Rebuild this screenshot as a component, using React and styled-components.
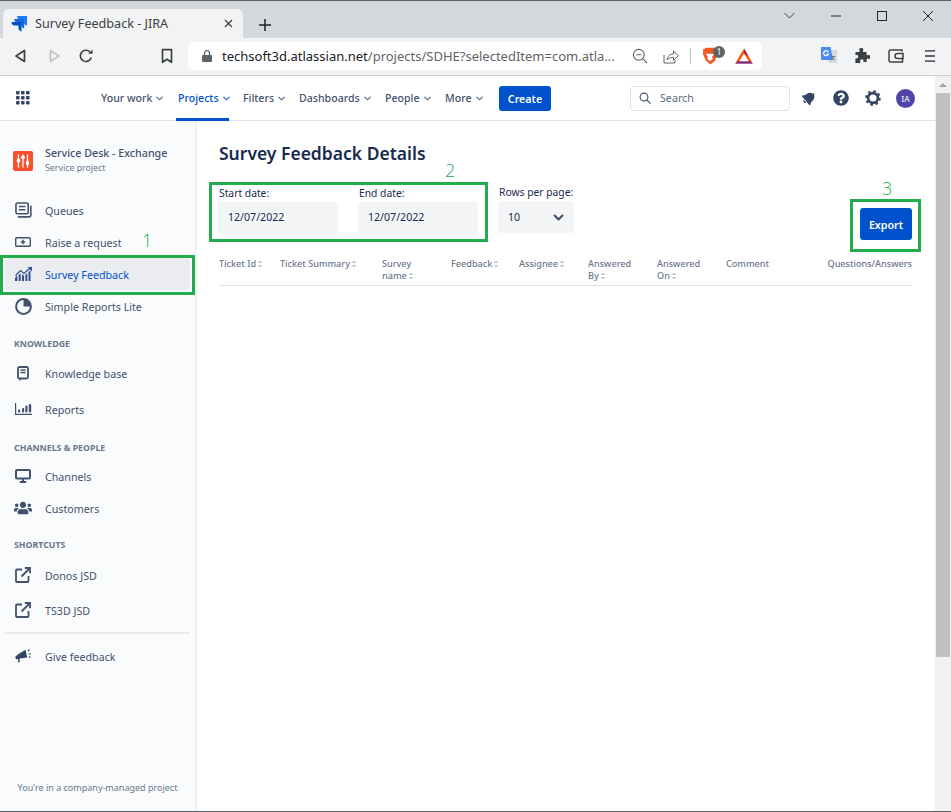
import React from "react";
import styled, { createGlobalStyle } from "styled-components";
import { FaBell, FaQuestionCircle, FaUsers } from "react-icons/fa";

const Global = createGlobalStyle`
  html, body { margin: 0; padding: 0; background: #fff; overflow: hidden; }
  * { box-sizing: border-box; }
`;

const Chevron = ({ size = 9, color = "#6b778c", width = 1.6 }) => (
  <svg width={size} height={size} viewBox="0 0 10 10" fill="none">
    <path d="M2 3.500 5 6.500 8 3.500" stroke={color} strokeWidth={width} strokeLinecap="round" strokeLinejoin="round" />
  </svg>
);

const SortIcon = () => (
  <SortMark viewBox="0 0 6 8" width="6" height="8">
    <path d="M3 .5 5.400 3H.6zM3 7.500 .6 5h4.800z" fill="#c1c7d0" />
  </SortMark>
);

const JiraLogo = () => (
  <svg width="17" height="17" viewBox="0 0 17 17">
    <path d="M6 1h10v9.500c-1.900-.2-3-1.400-3-3.300V4.600H9C7.200 4.600 6.100 3 6 1z" fill="#1d7afc" />
    <path d="M3.200 3.900h10v9.600c-1.900-.2-3-1.500-3-3.400V7.500h-4c-1.800 0-2.900-1.600-3-3.600z" fill="#1868db" />
    <path d="M.5 7h10v9.500c-1.900-.2-3-1.500-3-3.400v-2.600h-4C1.700 10.500.6 9 .5 7z" fill="#0052cc" />
  </svg>
);

const BackIcon = () => (
  <svg width="16" height="16" viewBox="0 0 16 16" fill="none">
    <path d="M11.500 2.500v11L3 8z" stroke="#3c4043" strokeWidth="1.700" strokeLinejoin="round" />
  </svg>
);

const ForwardIcon = () => (
  <svg width="16" height="16" viewBox="0 0 16 16" fill="none">
    <path d="M4.500 2.500v11L13 8z" stroke="#b5b8bb" strokeWidth="1.400" strokeLinejoin="round" />
  </svg>
);

const ReloadIcon = () => (
  <svg width="16" height="16" viewBox="0 0 16 16" fill="none">
    <path d="M13.300 9.500A5.600 5.600 0 1 1 11.800 3.800" stroke="#3c4043" strokeWidth="1.600" />
    <path d="M10.200 5.700h4.300V1.400z" fill="#3c4043" />
  </svg>
);

const BookmarkIcon = () => (
  <svg width="14" height="16" viewBox="0 0 14 16" fill="none">
    <path d="M2.500 1.700h9v12.600L7 11.300l-4.500 3z" stroke="#3c4043" strokeWidth="1.700" strokeLinejoin="round" />
  </svg>
);

const LockIcon = () => (
  <LockSvg width="10" height="12" viewBox="0 0 10 12">
    <path d="M1 5h8a1 1 0 0 1 1 1v5a1 1 0 0 1-1 1H1a1 1 0 0 1-1-1V6a1 1 0 0 1 1-1z" fill="#5f6368" />
    <path d="M2.500 5V3.200a2.500 2.500 0 0 1 5 0V5" stroke="#5f6368" strokeWidth="1.200" fill="none" />
  </LockSvg>
);

const ZoomOutIcon = () => (
  <svg width="16" height="16" viewBox="0 0 16 16" fill="none">
    <circle cx="6.800" cy="6.800" r="5.400" stroke="#5f6368" strokeWidth="1.100" />
    <path d="M10.800 10.800 15 15M4.300 6.800h5" stroke="#5f6368" strokeWidth="1.100" />
  </svg>
);

const ShareIcon = () => (
  <svg width="16" height="16" viewBox="0 0 16 16" fill="none">
    <path d="M1 7v8h11v-3" stroke="#5f6368" strokeWidth="1" />
    <path d="M4 12c.4-3.800 3.200-6 6.500-6V3l5 4.700-5 4.500V9.300C8 9.300 5.800 10 4 12z" stroke="#5f6368" strokeWidth="1" strokeLinejoin="round" />
  </svg>
);

const BraveIcon = () => (
  <svg width="16" height="18" viewBox="0 0 16 18">
    <path d="M3.500.8h9l1 1.200 1.700.3-.5 2.500.6 1.500-2 7.200-4.800 3.900-4.800-3.900L.7 6.300l.6-1.500-.5-2.500 1.700-.3z" fill="#f15a22" />
    <path d="M3.500 6.500 6.700 7 8 6.500 9.300 7l3.200-.5-2.400 3.200.7 2.300L8 14l-2.800-2 .7-2.300z" fill="#fff" />
  </svg>
);

const BatIcon = () => (
  <svg width="18" height="16" viewBox="0 0 18 16">
    <path d="M9 .5 17.800 15.500H.2z" fill="#ff5000" />
    <path d="M9 .5 13.400 8 9 5.400z" fill="#9e1f63" />
    <path d="M.2 15.500h17.600l-3-2.200H3.200z" fill="#662d91" />
    <path d="M9 5.400 13.800 13.300H4.200z" fill="#fff" />
  </svg>
);

const TranslateIcon = () => (
  <svg width="16" height="17" viewBox="0 0 16 17">
    <path d="M6 3h10v13H8z" fill="#d8dadc" />
    <path d="M0 0h9.500L12 13H0z" fill="#4a8af4" />
    <path d="M7.400 5.200A2.500 2.500 0 1 0 7.500 7H5.200" fill="none" stroke="#fff" strokeWidth="1.200" />
    <path d="M10.500 9.500h4M12.500 9v1c0 1.200-1 2.400-2 3M11.500 10.500c.4 1 1.300 2 2.500 2.500" fill="none" stroke="#6d7276" strokeWidth=".9" />
  </svg>
);

const PuzzleIcon = () => (
  <svg width="15" height="15" viewBox="0 0 15 15">
    <path d="M1 4h3.200a1 1 0 0 0 .4-1C4.400 2.500 4.300 2 4.300 1.800a2 2 0 0 1 4 0c0 .3-.1.700-.3 1.200a1 1 0 0 0 .4 1H11a.6.6 0 0 1 .6.6v2.200a1 1 0 0 0 1 .4c.4-.2.800-.3 1-.3a2 2 0 0 1 0 4c-.2 0-.6-.1-1-.3a1 1 0 0 0-1 .4v2.400a.6.6 0 0 1-.6.6H8.400c.3-2-.3-2.800-1.600-2.800S4.900 12.900 5.200 15H1a.6.6 0 0 1-.6-.6v-4c2 .3 2.800-.3 2.800-1.600S2.400 6.900.4 7.200V4.600A.6.6 0 0 1 1 4z" fill="#3c4043" />
  </svg>
);

const WalletIcon = () => (
  <svg width="16" height="14" viewBox="0 0 16 14" fill="none">
    <path d="M14 2.500V1H2.500A1.500 1.500 0 0 0 1 2.500v9A1.500 1.500 0 0 0 2.500 13h12V10" stroke="#3c4043" strokeWidth="1.500" />
    <path d="M15 4.500H9.500a2.500 2.500 0 0 0 0 5H15z" stroke="#3c4043" strokeWidth="1.500" />
  </svg>
);

const MenuIcon = () => (
  <MenuSvg width="12" height="12" viewBox="0 0 12 12">
    <path d="M1 0h10v1.800H1zM1 5.100h10v1.800H1zM1 10.200h10V12H1z" fill="#5f6368" />
  </MenuSvg>
);

const AppGrid = () => (
  <svg width="14" height="14" viewBox="0 0 14 14" fill="#344563">
    {[0, 5, 10].map((y) => [0, 5, 10].map((x) => <rect key={`${x}-${y}`} x={x} y={y} width="3.600" height="3.600" rx="1" />))}
  </svg>
);

const SearchIcon = () => (
  <svg width="12" height="12" viewBox="0 0 12 12" fill="none">
    <circle cx="5" cy="5" r="3.900" stroke="#42526e" strokeWidth="1.100" />
    <path d="M8 8l3.300 3.300" stroke="#42526e" strokeWidth="1.100" strokeLinecap="round" />
  </svg>
);

const GearIcon = () => (
  <svg width="16" height="16" viewBox="0 0 16 16" fill="none">
    <circle cx="8" cy="8" r="4.900" stroke="#344563" strokeWidth="2.600" />
    <circle cx="8" cy="8" r="6.800" stroke="#344563" strokeWidth="2" strokeDasharray="2.600 2.740" />
  </svg>
);

const ProjectLogo = () => (
  <svg width="20" height="20" viewBox="0 0 20 20">
    <rect width="20" height="20" rx="2" fill="#f4512c" />
    <path d="M5.500 4v12M10 4v12M14.500 4v12" stroke="#fff" strokeWidth="1.300" strokeLinecap="round" />
    <circle cx="5.500" cy="9.500" r="1.900" fill="#fff" />
    <circle cx="10" cy="6.300" r="1.900" fill="#fff" />
    <circle cx="14.500" cy="12" r="1.900" fill="#fff" />
  </svg>
);

const QueuesIcon = () => (
  <svg width="17" height="16" viewBox="0 0 18 17" fill="none">
    <rect x="1" y="1" width="13" height="11.500" rx="1.500" stroke="#42526e" strokeWidth="1.700" />
    <path d="M4 4.800h7M4 8.200h7" stroke="#42526e" strokeWidth="1.500" />
    <path d="M16.800 4v10a1.800 1.800 0 0 1-1.800 1.800H3" stroke="#42526e" strokeWidth="1.700" />
  </svg>
);

const RaiseIcon = () => (
  <svg width="16" height="10" viewBox="0 0 16 10" fill="none">
    <rect x=".7" y=".7" width="14.600" height="8.600" rx="1" stroke="#42526e" strokeWidth="1.400" />
    <path d="M8 2.800v4.400M5.800 5h4.400" stroke="#42526e" strokeWidth="1.500" />
  </svg>
);

const SurveyIcon = () => (
  <svg width="17" height="14" viewBox="0 0 17 14" fill="#344f8f">
    <path d="M0 11l1.600-2 .8.600V14H0zM3.700 8l2-1.800V14h-2zM7 7.300l2 1.500V14H7zM10.300 8l2-2v8h-2zM13.500 5l2-2v11h-2z" />
    <path d="M.5 8.500 5.500 3.500l3.500 3 5.500-5" fill="none" stroke="#344f8f" strokeWidth="1.200" />
    <path d="M12.500 0H17v4.500z" />
  </svg>
);

const PieIcon = () => (
  <svg width="17" height="17" viewBox="0 0 17 17" fill="none">
    <circle cx="8.500" cy="8.500" r="7.400" stroke="#42526e" strokeWidth="2" />
    <path d="M8.500 1.500a7 7 0 0 1 7 7h-7z" fill="#42526e" />
  </svg>
);

const BookIcon = () => (
  <svg width="12" height="15" viewBox="0 0 12 15" fill="none">
    <rect x="1" y="1" width="10" height="11.500" rx="1.500" stroke="#42526e" strokeWidth="1.800" />
    <path d="M3.500 4h5M3.500 6.500h5" stroke="#42526e" strokeWidth="1.400" />
    <path d="M3 13v1.500" stroke="#42526e" strokeWidth="1.300" />
  </svg>
);

const BarsIcon = () => (
  <svg width="17" height="12" viewBox="0 0 17 12" fill="#42526e">
    <path d="M0 0h1.200v10.700H17V12H0z" />
    <rect x="3" y="6.500" width="2.200" height="3" rx="1" />
    <rect x="7" y="5" width="2.200" height="4.500" rx="1" />
    <rect x="10.300" y="2.500" width="2.200" height="7" rx="1" />
    <rect x="13.800" y="1" width="2.400" height="8.500" rx="1" />
  </svg>
);

const MonitorIcon = () => (
  <svg width="16" height="14" viewBox="0 0 16 14" fill="none">
    <rect x="1" y="1" width="14" height="8.500" rx="1" stroke="#42526e" strokeWidth="2" />
    <path d="M8 10v3M4.800 13h6.400" stroke="#42526e" strokeWidth="2" />
  </svg>
);

const ExternalIcon = () => (
  <svg width="16" height="16" viewBox="0 0 16 16" fill="none">
    <path d="M7 2.500H2a1 1 0 0 0-1 1V14a1 1 0 0 0 1 1h10.500a1 1 0 0 0 1-1V9" stroke="#42526e" strokeWidth="1.800" />
    <path d="M6.500 9.500 14.500 1.500M9.800 1h5.200v5.200" stroke="#42526e" strokeWidth="1.800" />
  </svg>
);

const MegaphoneIcon = () => (
  <svg width="17" height="14" viewBox="0 0 17 14" fill="#344563">
    <path d="M.2 8 2.800 5.500 10.500.8l1.700 7.800-7 .9-1 .2.900 3.400-1.500.4L2.800 10 1 10.200z" />
    <path d="M13 2l1.500-1.500M13.700 5H16M13.700 7.600l1.800 1" fill="none" stroke="#344563" strokeWidth="1.100" />
  </svg>
);

const Window = styled.div`
  position: relative;
  width: 951px;
  height: 812px;
  display: flex;
  flex-direction: column;
  overflow: hidden;
  border-top: 1px solid #5f6265;
  border-bottom: 1px solid #5f6265;
  font-family: "Noto Sans", "Open Sans", sans-serif;
`;

const TabStrip = styled.div`
  height: 37px;
  flex: none;
  background: #d5d8db;
  display: flex;
  align-items: flex-end;
  padding-left: 3px;
`;

const Tab = styled.div`
  width: 240px;
  height: 29px;
  background: #f2f3f4;
  border-radius: 6px 6px 0 0;
  display: flex;
  align-items: center;
  padding: 0 8px;
  gap: 7px;
  font-size: 12.600px;
  color: #3c4043;
`;

const TabTitle = styled.span`
  flex: 1;
`;

const TabClose = styled.svg`
  margin-right: 2px;
`;

const NewTab = styled.svg`
  margin: 0 0 7px 16px;
`;

const WindowButtons = styled.div`
  margin-left: auto;
  align-self: stretch;
  display: flex;
  align-items: center;
  gap: 36px;
  padding: 0 18px 8px 0;
`;

const Toolbar = styled.div`
  height: 38px;
  flex: none;
  background: #f2f3f4;
  border-bottom: 1px solid #d0d2d4;
  display: flex;
  align-items: center;
  padding: 0 0 2px 13px;
`;

const ToolGroup = styled.div`
  display: flex;
  align-items: center;
  gap: 16.500px;
  width: 147px;
`;

const Bookmark = styled.div`
  width: 28px;
  display: flex;
`;

const AddressBar = styled.div`
  width: 574px;
  height: 28px;
  background: #fff;
  border-radius: 5px;
  display: flex;
  align-items: center;
  padding: 0 0 0 14px;
`;

const LockSvg = styled.svg`
  flex: none;
`;

const Url = styled.span`
  margin-left: 10px;
  width: 395px;
  flex: none;
  overflow: hidden;
  font-size: 13px;
  white-space: nowrap;
  color: #5f6368;
`;

const Domain = styled.span`
  color: #202124;
`;

const AddressIcons = styled.div`
  margin-left: 15px;
  display: flex;
  align-items: center;
  gap: 15px;
`;

const Separator = styled.div`
  width: 1px;
  height: 16px;
  background: #b9bbbe;
  margin: 0 -4px 0 -4px;
`;

const BraveWrap = styled.div`
  position: relative;
  display: flex;
  width: 18px;
`;

const BraveBadge = styled.span`
  position: absolute;
  left: 11px;
  top: -1px;
  width: 12px;
  height: 12px;
  border-radius: 50%;
  background: #5f6368;
  color: #fff;
  font-size: 8px;
  line-height: 12px;
  text-align: center;
`;

const Extensions = styled.div`
  margin-left: 59px;
  display: flex;
  align-items: center;
  gap: 18px;
`;

const MenuSvg = styled.svg`
  margin-left: 2px;
`;

const PageRow = styled.div`
  flex: 1;
  min-height: 0;
  display: flex;
`;

const Page = styled.div`
  flex: 1;
  min-width: 0;
  display: flex;
  flex-direction: column;
`;

const Scrollbar = styled.div`
  width: 16px;
  flex: none;
  background: #f1f1f1;
  display: flex;
  flex-direction: column;
  align-items: center;
  padding: 0 1px;
`;

const ScrollArrow = styled.div`
  height: 17px;
  flex: none;
  display: flex;
  align-items: center;
  width: 0;
  &::before {
    content: "";
    border-left: 4px solid transparent;
    border-right: 4px solid transparent;
    border-bottom: 4px solid #a3a3a3;
    margin-left: -4px;
  }
`;

const ScrollThumb = styled.div`
  width: 100%;
  height: 564px;
  background: #c1c1c1;
`;

const TopNav = styled.nav`
  height: 45px;
  flex: none;
  background: #fff;
  border-bottom: 1px solid #dfe1e6;
  display: flex;
  align-items: center;
  padding: 0 0 0 16px;
`;

const NavLinks = styled.div`
  margin-left: 71px;
  display: flex;
  align-items: center;
  height: 100%;
`;

const NavLink = styled.div`
  position: relative;
  height: 100%;
  display: flex;
  align-items: center;
  gap: 3px;
  margin-right: 8px;
  width: ${(p) => p.$width}px;
  font-size: 10.600px;
  font-weight: 500;
  white-space: nowrap;
  color: ${(p) => (p.$active ? "#0052cc" : "#42526e")};
  ${(p) =>
    p.$active &&
    `&::after {
      content: "";
      position: absolute;
      left: -2px;
      width: 53px;
      bottom: -1px;
      height: 3px;
      background: #0052cc;
    }`}
`;

const CreateButton = styled.button`
  width: 52px;
  height: 25px;
  border: 0;
  border-radius: 3px;
  background: #0052cc;
  color: #fff;
  padding: 2px 0 0;
  font: 600 10.700px "Noto Sans", sans-serif;
`;

const SearchBox = styled.div`
  margin-left: 79px;
  width: 160px;
  height: 25px;
  border: 1px solid #dfe1e6;
  border-radius: 4px;
  display: flex;
  align-items: center;
  gap: 9px;
  padding: 0 8px;
  font-size: 10.700px;
  color: #5e6c84;
`;

const NavIcons = styled.div`
  margin-left: 10px;
  display: flex;
  align-items: center;
  gap: 14px;
`;

const NavIconSlot = styled.div`
  width: 18px;
  height: 18px;
  display: flex;
  align-items: center;
  justify-content: center;
  color: #344563;
`;

const BellSlot = styled(NavIconSlot)`
  transform: rotate(50deg);
`;

const Avatar = styled.div`
  width: 19px;
  height: 19px;
  border-radius: 50%;
  background: #5243aa;
  color: #dfe1e6;
  font-size: 8px;
  font-weight: 600;
  line-height: 19px;
  text-align: center;
`;

const Body = styled.div`
  flex: 1;
  min-height: 0;
  display: flex;
`;

const Sidebar = styled.aside`
  width: 197px;
  flex: none;
  background: #fafbfc;
  border-right: 2px solid #f0f1f4;
  display: flex;
  flex-direction: column;
  padding: 26px 5px 16px;
`;

const ProjectHeader = styled.div`
  height: 28px;
  margin-bottom: 19px;
  display: flex;
  align-items: center;
  gap: 12px;
  padding-left: 8px;
`;

const ProjectText = styled.div`
  padding-bottom: 2px;
`;

const ProjectName = styled.div`
  font-size: 10.700px;
  font-weight: 500;
  line-height: 15px;
  color: #42526e;
`;

const ProjectType = styled.div`
  font-size: 8.800px;
  line-height: 14px;
  color: #6b778c;
`;

const NavRow = styled.div`
  height: ${(p) => p.$h || 32}px;
  display: flex;
  align-items: center;
  padding: 2px 0 0 8px;
  border-radius: 3px;
  font-size: 10.700px;
  color: ${(p) => (p.$active ? "#0052cc" : "#42526e")};
  background: ${(p) => (p.$active ? "#ebecf0" : "transparent")};
`;

const RowIcon = styled.span`
  width: 32px;
  flex: none;
  display: flex;
  align-items: center;
  justify-content: center;
  margin-top: -2px;
  padding-right: 12px;
  color: #42526e;
`;

const GroupTitle = styled.div`
  height: 16px;
  line-height: 18px;
  margin: ${(p) => p.$top}px 0 ${(p) => p.$bottom}px 9px;
  font-size: 8.800px;
  font-weight: 700;
  color: #6b778c;
`;

const Divider = styled.div`
  height: 2px;
  margin: 4px 0 6px;
  background: #ebecf0;
`;

const SideFooter = styled.div`
  margin-top: auto;
  padding-bottom: 1px;
  text-align: center;
  font-size: 9px;
  color: #6b778c;
`;

const Main = styled.main`
  flex: 1;
  min-width: 0;
  background: #fff;
  padding: 20px 23px 0 22px;
`;

const Title = styled.h1`
  margin: 0;
  height: 25px;
  font-size: 17.500px;
  line-height: 25px;
  font-weight: 600;
  color: #172b4d;
`;

const Controls = styled.div`
  margin-top: 17px;
  height: 75px;
  display: flex;
  align-items: flex-start;
`;

const Field = styled.div`
  width: ${(p) => p.$width}px;
  margin-right: ${(p) => p.$gap}px;
  margin-top: ${(p) => p.$top}px;
  margin-left: -1px;
  display: flex;
  flex-direction: column;
`;

const FieldLabel = styled.label`
  height: 15px;
  line-height: 15px;
  padding-left: 1px;
  margin-bottom: 1px;
  font-size: 10.300px;
  white-space: nowrap;
  color: #172b4d;
`;

const InputBox = styled.div`
  height: 32px;
  border-radius: 3px;
  background: #f4f5f7;
  display: flex;
  align-items: center;
  justify-content: space-between;
  padding: 0 9px ${(p) => (p.$select ? 0 : 2)}px 10px;
  font-size: 10.600px;
  color: #172b4d;
`;

const ExportButton = styled.button`
  margin: 25px 0 0 auto;
  width: 52px;
  height: 32px;
  border: 0;
  border-radius: 3px;
  background: #0052cc;
  color: #fff;
  padding: 2px 0 0;
  font: 600 10.700px "Noto Sans", sans-serif;
`;

const TableHead = styled.div`
  display: grid;
  grid-template-columns: 61px 102px 69px 68px 69px 69px 69px 1fr auto;
  height: 28px;
  border-bottom: 1px solid #dfe1e6;
  font-size: 9.100px;
  line-height: 12px;
  font-weight: 500;
  color: #6b778c;
`;

const SortMark = styled.svg`
  margin-left: 1px;
  vertical-align: -1px;
`;

const Outline = styled.div`
  position: absolute;
  left: ${(p) => p.$x}px;
  top: ${(p) => p.$y}px;
  width: ${(p) => p.$w}px;
  height: ${(p) => p.$h}px;
  border: 3px solid #22ac4c;
  pointer-events: none;
`;

const Callout = styled.span`
  position: absolute;
  left: ${(p) => p.$x}px;
  top: ${(p) => p.$y}px;
  font: 300 18px/20px "Open Sans", sans-serif;
  color: #22ac4c;
`;

const navItems = [
  { label: "Your work", width: 69 },
  { label: "Projects", width: 57, active: true },
  { label: "Filters", width: 48 },
  { label: "Dashboards", width: 78 },
  { label: "People", width: 52 },
  { label: "More", width: 46 },
];

const columns = [
  ["Ticket Id", true],
  ["Ticket Summary", true],
  [<>Survey<br />name</>, true],
  ["Feedback", true],
  ["Assignee", true],
  [<>Answered<br />By</>, true],
  [<>Answered<br />On</>, true],
  ["Comment", false],
  ["Questions/Answers", false],
];

export default function App() {
  return (
    <Window>
      <Global />
      <TabStrip>
        <Tab>
          <JiraLogo />
          <TabTitle>Survey Feedback - JIRA</TabTitle>
          <TabClose width="9" height="9" viewBox="0 0 9 9">
            <path d="M1 1l7 7M8 1 1 8" stroke="#3c4043" strokeWidth="1.300" />
          </TabClose>
        </Tab>
        <NewTab width="12" height="12" viewBox="0 0 12 12">
          <path d="M6 0v12M0 6h12" stroke="#202124" strokeWidth="1.500" />
        </NewTab>
        <WindowButtons>
          <svg width="11" height="7" viewBox="0 0 11 7" fill="none"><path d="M.5 1 5.500 6l5-5" stroke="#3c4043" /></svg>
          <svg width="10" height="2" viewBox="0 0 10 2"><path d="M0 1h10" stroke="#202124" /></svg>
          <svg width="10" height="10" viewBox="0 0 10 10" fill="none"><rect x=".5" y=".5" width="9" height="9" stroke="#202124" /></svg>
          <svg width="10" height="10" viewBox="0 0 10 10"><path d="M0 0l10 10M10 0 0 10" stroke="#202124" /></svg>
        </WindowButtons>
      </TabStrip>
      <Toolbar>
        <ToolGroup>
          <BackIcon />
          <ForwardIcon />
          <ReloadIcon />
        </ToolGroup>
        <Bookmark><BookmarkIcon /></Bookmark>
        <AddressBar>
          <LockIcon />
          <Url><Domain>techsoft3d.atlassian.net</Domain>/projects/SDHE?selectedItem=com.atla...</Url>
          <AddressIcons>
            <ZoomOutIcon />
            <ShareIcon />
            <Separator />
            <BraveWrap>
              <BraveIcon />
              <BraveBadge>1</BraveBadge>
            </BraveWrap>
            <BatIcon />
          </AddressIcons>
        </AddressBar>
        <Extensions>
          <TranslateIcon />
          <PuzzleIcon />
          <WalletIcon />
          <MenuIcon />
        </Extensions>
      </Toolbar>
      <PageRow>
        <Page>
          <TopNav>
            <AppGrid />
            <NavLinks>
              {navItems.map((item) => (
                <NavLink key={item.label} $width={item.width} $active={item.active}>
                  {item.label}
                  <Chevron color={item.active ? "#4c7fd0" : "#7a869a"} />
                </NavLink>
              ))}
              <CreateButton>Create</CreateButton>
            </NavLinks>
            <SearchBox>
              <SearchIcon />
              Search
            </SearchBox>
            <NavIcons>
              <BellSlot><FaBell size={14} /></BellSlot>
              <NavIconSlot><FaQuestionCircle size={16} /></NavIconSlot>
              <NavIconSlot><GearIcon /></NavIconSlot>
              <Avatar>IA</Avatar>
            </NavIcons>
          </TopNav>
          <Body>
            <Sidebar>
              <ProjectHeader>
                <ProjectLogo />
                <ProjectText>
                  <ProjectName>Service Desk - Exchange</ProjectName>
                  <ProjectType>Service project</ProjectType>
                </ProjectText>
              </ProjectHeader>
              <NavRow><RowIcon><QueuesIcon /></RowIcon>Queues</NavRow>
              <NavRow><RowIcon><RaiseIcon /></RowIcon>Raise a request</NavRow>
              <NavRow $active><RowIcon><SurveyIcon /></RowIcon>Survey Feedback</NavRow>
              <NavRow><RowIcon><PieIcon /></RowIcon>Simple Reports Lite</NavRow>
              <GroupTitle $top={13} $bottom={4}>KNOWLEDGE</GroupTitle>
              <NavRow $h={36}><RowIcon><BookIcon /></RowIcon>Knowledge base</NavRow>
              <NavRow $h={36}><RowIcon><BarsIcon /></RowIcon>Reports</NavRow>
              <GroupTitle $top={12} $bottom={5}>CHANNELS &amp; PEOPLE</GroupTitle>
              <NavRow><RowIcon><MonitorIcon /></RowIcon>Channels</NavRow>
              <NavRow><RowIcon><FaUsers size={18} /></RowIcon>Customers</NavRow>
              <GroupTitle $top={12} $bottom={6}>SHORTCUTS</GroupTitle>
              <NavRow $h={34}><RowIcon><ExternalIcon /></RowIcon>Donos JSD</NavRow>
              <NavRow $h={36}><RowIcon><ExternalIcon /></RowIcon>TS3D JSD</NavRow>
              <Divider />
              <NavRow><RowIcon><MegaphoneIcon /></RowIcon>Give feedback</NavRow>
              <SideFooter>You're in a company-managed project</SideFooter>
            </Sidebar>
            <Main>
              <Title>Survey Feedback Details</Title>
              <Controls>
                <Field $width={120} $gap={21} $top={3}>
                  <FieldLabel>Start date:</FieldLabel>
                  <InputBox>12/07/2022</InputBox>
                </Field>
                <Field $width={120} $gap={21} $top={3}>
                  <FieldLabel>End date:</FieldLabel>
                  <InputBox>12/07/2022</InputBox>
                </Field>
                <Field $width={76} $gap={0} $top={2}>
                  <FieldLabel>Rows per page:</FieldLabel>
                  <InputBox $select>10<Chevron size={13} color="#42526e" width={1.700} /></InputBox>
                </Field>
                <ExportButton>Export</ExportButton>
              </Controls>
              <TableHead>
                {columns.map(([label, sortable], i) => (
                  <div key={i}>
                    {label}
                    {sortable && <SortIcon />}
                  </div>
                ))}
              </TableHead>
            </Main>
          </Body>
        </Page>
        <Scrollbar>
          <ScrollArrow />
          <ScrollThumb />
        </Scrollbar>
      </PageRow>
      <Outline $x={0} $y={254} $w={195} $h={40} />
      <Outline $x={209} $y={181} $w={279} $h={60} />
      <Outline $x={850} $y={198} $w={71} $h={53} />
      <Callout $x={142} $y={229}>1</Callout>
      <Callout $x={445} $y={159}>2</Callout>
      <Callout $x={882} $y={177}>3</Callout>
    </Window>
  );
}
